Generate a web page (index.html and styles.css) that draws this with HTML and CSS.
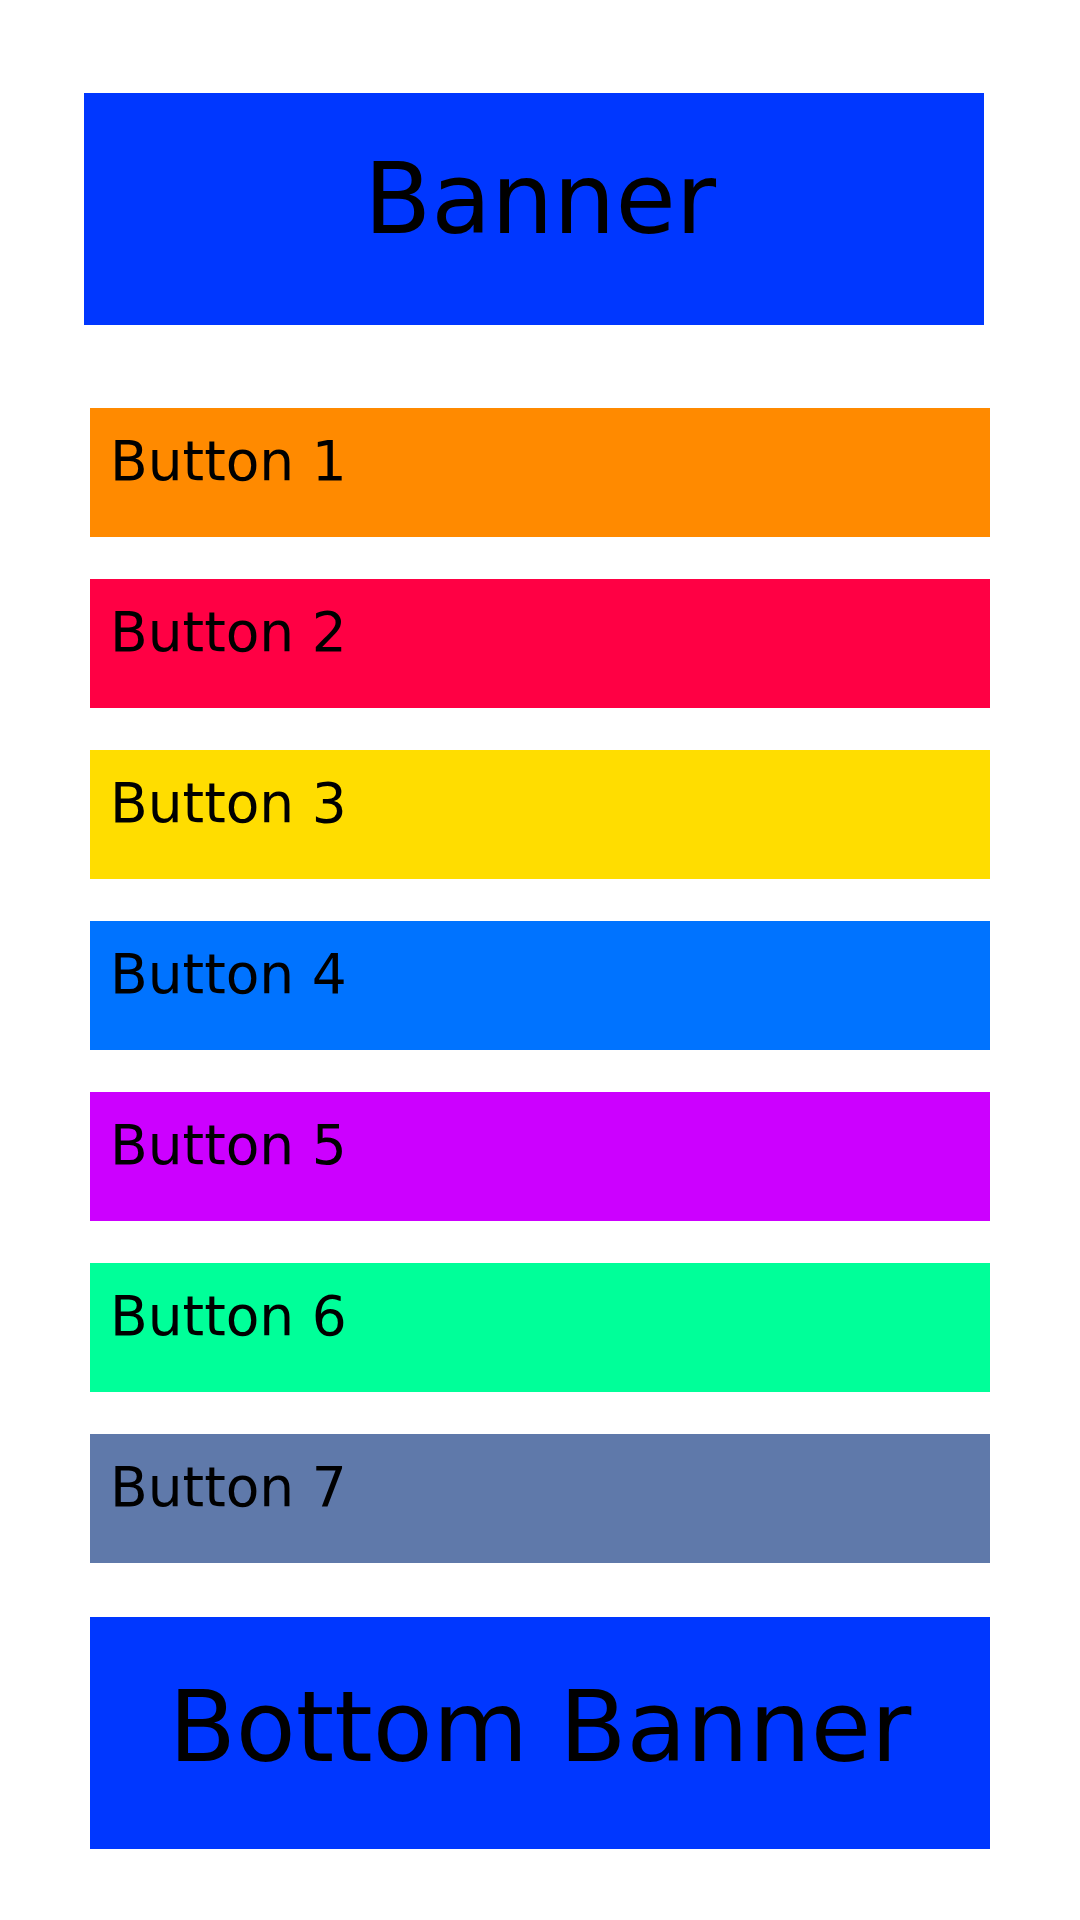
FILE: index.html
```html
<!DOCTYPE html>
<html>
<head>
<meta charset="utf-8">
<link rel="stylesheet" href="styles.css">
</head>
<body>
<div class="page">
  <div class="banner banner-top">Banner</div>
  <div class="buttons">
    <div class="btn btn-1">Button 1</div>
    <div class="btn btn-2">Button 2</div>
    <div class="btn btn-3">Button 3</div>
    <div class="btn btn-4">Button 4</div>
    <div class="btn btn-5">Button 5</div>
    <div class="btn btn-6">Button 6</div>
    <div class="btn btn-7">Button 7</div>
  </div>
  <div class="banner banner-bottom">Bottom Banner</div>
</div>
</body>
</html>
```
FILE: styles.css
```css
html, body {
  margin: 0;
  padding: 0;
  background: #ffffff;
}
body {
  font-family: "DejaVu Sans", sans-serif;
  color: #000000;
}
.page {
  display: flex;
  flex-direction: column;
  align-items: flex-start;
  padding: 93px 0 0 84px;
}
.banner {
  box-sizing: border-box;
  width: 900px;
  height: 232px;
  background: #0037ff;
  font-size: 98px;
  display: flex;
  align-items: center;
  justify-content: center;
}
.banner-top {
  padding-left: 12px;
  padding-bottom: 20px;
}
.banner-bottom {
  margin-top: 54px;
  margin-left: 6px;
  padding-bottom: 12px;
}
.buttons {
  margin-top: 83px;
  margin-left: 6px;
  display: flex;
  flex-direction: column;
  gap: 42px;
}
.btn {
  box-sizing: border-box;
  width: 900px;
  height: 129px;
  padding: 21px 20px 0;
  font-size: 55px;
}
.btn-1 { background: #ff8a00; }
.btn-2 { background: #ff0044; }
.btn-3 { background: #ffdd00; }
.btn-4 { background: #0073ff; }
.btn-5 { background: #cc00ff; }
.btn-6 { background: #00ff99; }
.btn-7 { background: #5f79aa; }
```
